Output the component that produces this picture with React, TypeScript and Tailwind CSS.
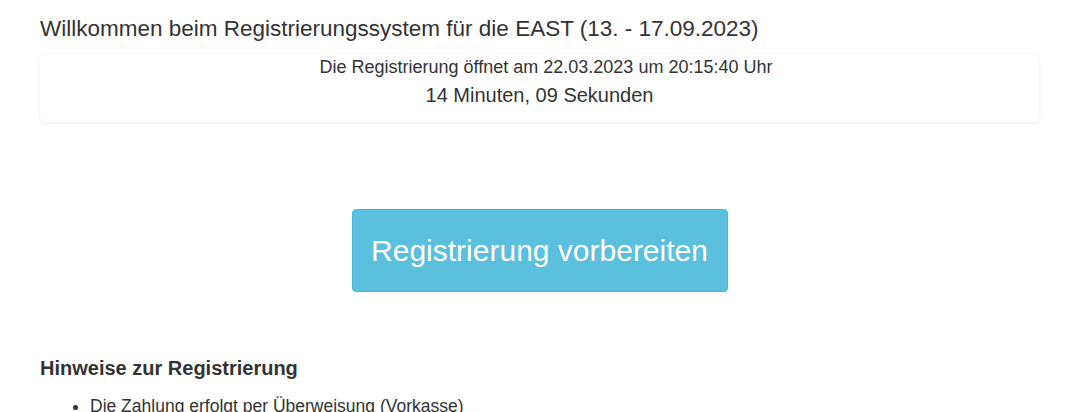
export default function App() {
  return (
    <div
      className="w-[1066px] h-[412px] overflow-hidden bg-white text-[#333]"
      style={{ fontFamily: '"Liberation Sans", Arial, sans-serif' }}
    >
      <div className="pl-[40px] w-[1039px]">
        <h1 className="pt-[14px] text-[22.5px] leading-[30px]">
          Willkommen beim Registrierungssystem für die EAST (13. - 17.09.2023)
        </h1>
        <div className="mt-[11px] rounded-[6px] bg-white shadow-[0_1px_4px_rgba(0,0,0,0.08)] pt-[1px] pb-[12px] text-center">
          <div className="pl-[13px] text-[18px] leading-[22px]">
            Die Registrierung öffnet am 22.03.2023 um 20:15:40 Uhr
          </div>
          <div className="pt-[2px] text-[20px] leading-[30px]">14 Minuten, 09 Sekunden</div>
        </div>
        <div className="flex justify-center pt-[87px]">
          <button className="h-[83px] w-[376px] rounded-[4px] border border-[#46b8da] bg-[#5bc0de] text-[30px] text-white">
            Registrierung vorbereiten
          </button>
        </div>
        <h3 className="mt-[63px] text-[20px] font-bold leading-[26px]">
          Hinweise zur Registrierung
        </h3>
        <ul className="mt-[14px] list-disc pl-[50px] text-[17.5px] leading-[22px]">
          <li>Die Zahlung erfolgt per Überweisung (Vorkasse)</li>
        </ul>
      </div>
    </div>
  );
}
